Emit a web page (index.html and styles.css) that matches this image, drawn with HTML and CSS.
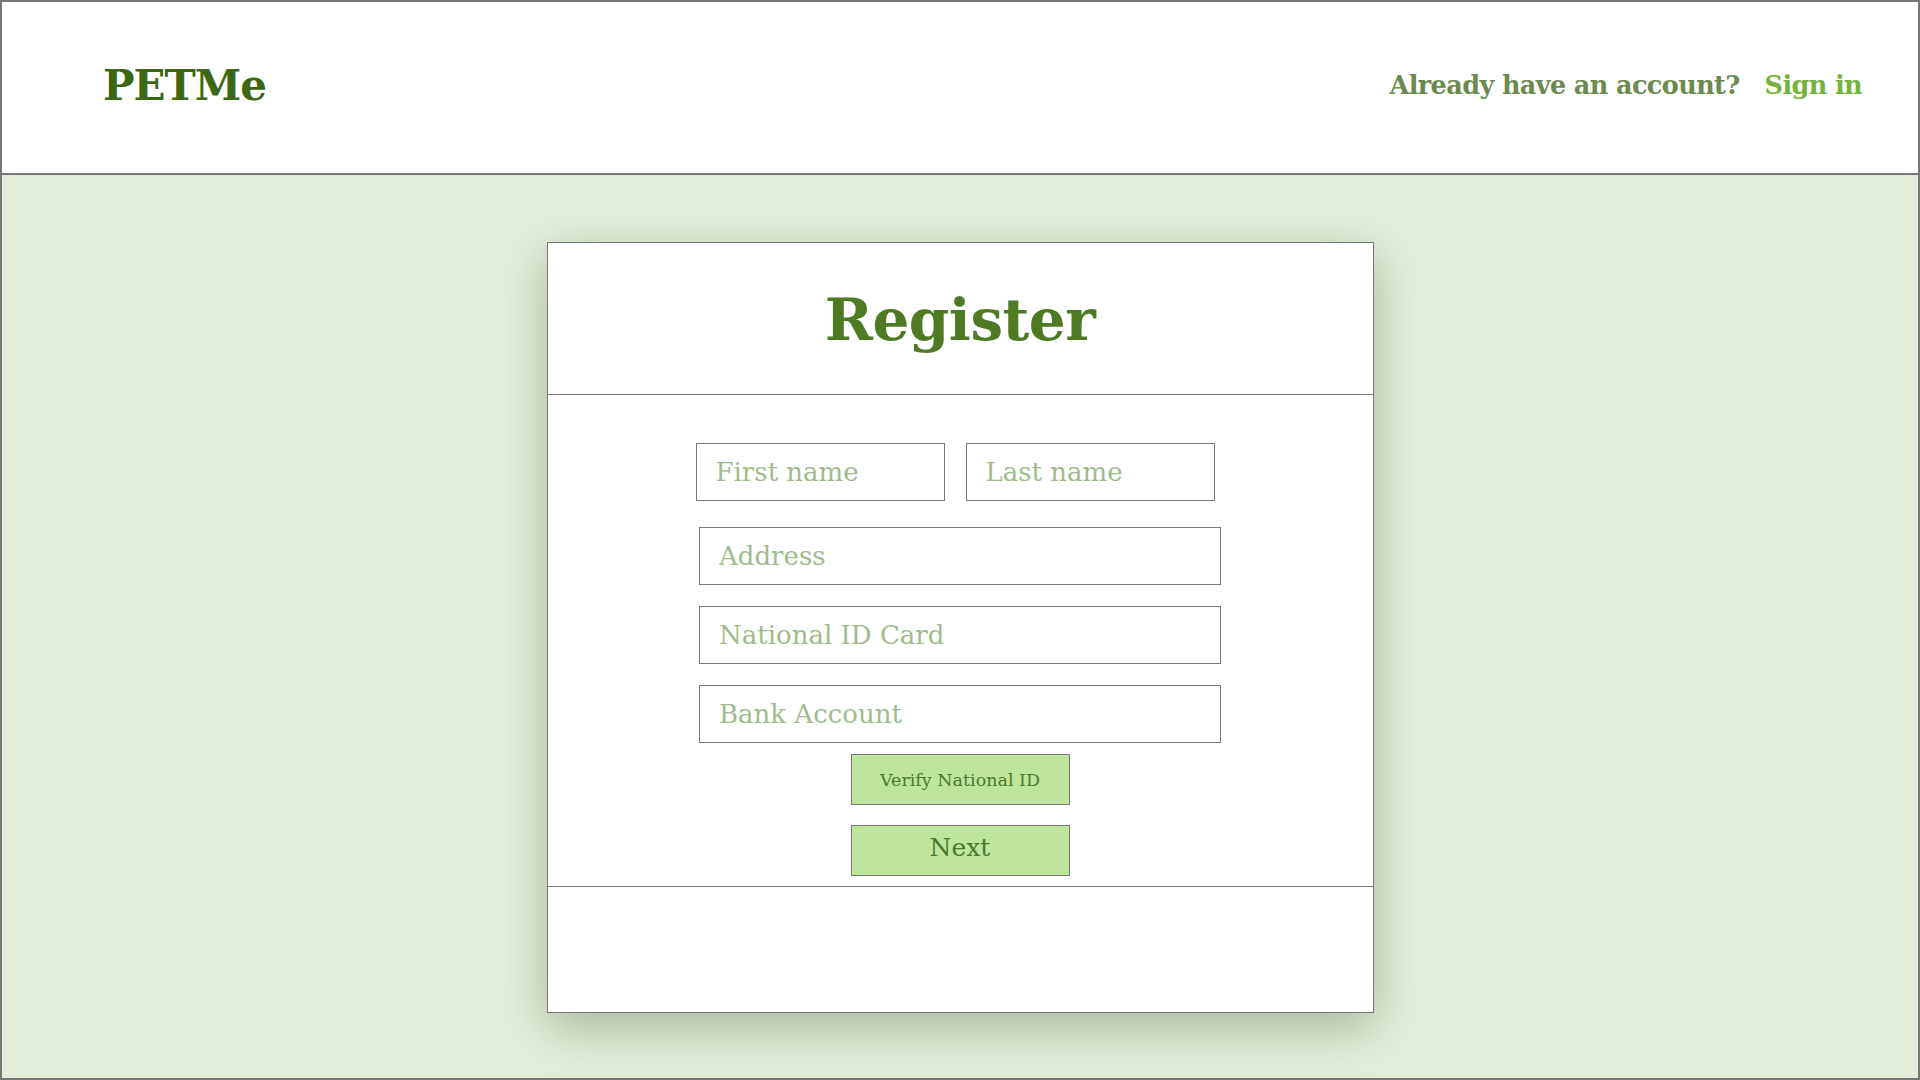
FILE: index.html
```html
<!DOCTYPE html>
<html lang="en">
<head>
<meta charset="utf-8">
<title>PETMe - Register</title>
<link rel="stylesheet" href="styles.css">
</head>
<body>
<div class="page">
  <header class="topbar">
    <div class="logo">PETMe</div>
    <nav class="auth">
      <span class="auth-q">Already have an account?</span>
      <a class="auth-link" href="#">Sign in</a>
    </nav>
  </header>
  <main class="main">
    <section class="card">
      <div class="card-head">
        <h1 class="title">Register</h1>
      </div>
      <form class="card-body">
        <div class="name-row">
          <input class="field field-half" type="text" placeholder="First name">
          <input class="field field-half" type="text" placeholder="Last name">
        </div>
        <input class="field field-wide f-address" type="text" placeholder="Address">
        <input class="field field-wide f-id" type="text" placeholder="National ID Card">
        <input class="field field-wide f-bank" type="text" placeholder="Bank Account">
        <button class="btn btn-verify" type="button">Verify National ID</button>
        <button class="btn btn-next" type="button">Next</button>
      </form>
      <div class="card-foot"></div>
    </section>
  </main>
</div>
</body>
</html>
```
FILE: styles.css
```css
* { box-sizing: border-box; }
html, body { margin: 0; padding: 0; }
body {
  font-family: "DejaVu Serif", "Liberation Serif", serif;
  background: #e2eeda;
}
.page {
  height: 1080px;
  border: 2px solid #777;
  display: flex;
  flex-direction: column;
  background: #e2eeda;
}
.topbar {
  height: 173px;
  flex: none;
  background: #fff;
  border-bottom: 2px solid #777;
  display: flex;
  align-items: center;
  justify-content: space-between;
  padding: 0 56px 0 101px;
}
.logo {
  font-size: 42px;
  font-weight: bold;
  letter-spacing: -1px;
  color: #3c6813;
  line-height: 1;
  margin-top: -4px;
}
.auth {
  display: flex;
  align-items: baseline;
  gap: 25px;
  font-size: 25.5px;
  font-weight: bold;
  letter-spacing: -0.6px;
  line-height: 1;
  margin-top: -4px;
}
.auth-q { color: #6a8a4f; }
.auth-link { color: #74b43c; text-decoration: none; }
.main {
  flex: 1;
  display: flex;
  justify-content: center;
  align-items: flex-start;
  padding-top: 67px;
}
.card {
  width: 827px;
  height: 771px;
  background: #fff;
  border: 1px solid #777;
  box-shadow: 0 14px 44px rgba(70, 95, 60, 0.38);
  display: flex;
  flex-direction: column;
}
.card-head {
  height: 152px;
  flex: none;
  border-bottom: 1px solid #777;
  display: flex;
  align-items: center;
  justify-content: center;
}
.title {
  margin: 0;
  font-size: 58px;
  font-weight: bold;
  letter-spacing: -0.5px;
  color: #4d7a23;
  line-height: 1;
  margin-top: 2px;
}
.card-body {
  height: 492px;
  flex: none;
  margin: 0;
  border-bottom: 1px solid #777;
  padding-top: 48px;
  display: flex;
  flex-direction: column;
  align-items: center;
}
.name-row {
  display: flex;
  gap: 21px;
  margin-right: 10px;
}
.field {
  height: 58px;
  border: 1px solid #777;
  border-radius: 0;
  background: #fff;
  padding: 0 0 0 19px;
  font-family: "DejaVu Serif", "Liberation Serif", serif;
  font-size: 26px;
  color: #4a6a34;
  outline: none;
}
.field::placeholder { color: #a0bb8c; opacity: 1; }
.field-half { width: 249px; }
.field-wide { width: 522px; }
.f-address { margin-top: 26px; }
.f-id { margin-top: 21px; }
.f-bank { margin-top: 21px; }
.btn {
  width: 219px;
  height: 51px;
  background: #bfe49c;
  border: 1px solid #777;
  border-radius: 0;
  color: #4b7a29;
  font-family: "DejaVu Serif", "Liberation Serif", serif;
  padding: 0;
  cursor: pointer;
}
.btn-verify { margin-top: 11px; font-size: 17.5px; }
.btn-next { margin-top: 20px; font-size: 25px; line-height: 1; padding-bottom: 6px; }
.card-foot { flex: 1; }
```
